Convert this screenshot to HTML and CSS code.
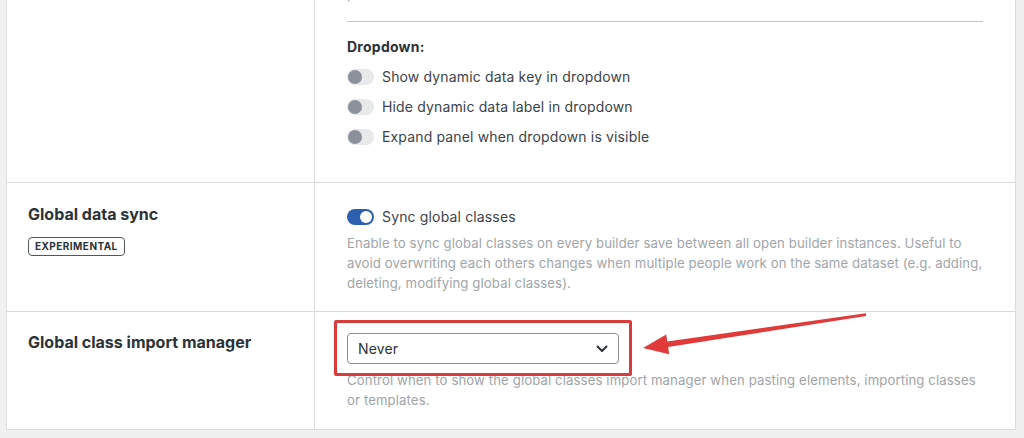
FILE: index.html
```html
<!DOCTYPE html>
<html lang="en">
<head>
<meta charset="utf-8">
<title>Settings</title>
<link rel="stylesheet" href="styles.css">
</head>
<body>
<div class="panel">
  <div class="row row-first">
    <div class="cell-label"></div>
    <div class="cell-field">
      <p class="desc desc-cut">panel.</p>
      <hr class="sep">
      <div class="group-title">Dropdown:</div>
      <div class="toggles">
        <label class="toggle-row"><span class="switch"><span class="knob"></span></span>Show dynamic data key in dropdown</label>
        <label class="toggle-row"><span class="switch"><span class="knob"></span></span>Hide dynamic data label in dropdown</label>
        <label class="toggle-row"><span class="switch"><span class="knob"></span></span>Expand panel when dropdown is visible</label>
      </div>
    </div>
  </div>
  <div class="row row-sync">
    <div class="cell-label">
      <div class="heading">Global data sync</div>
      <span class="badge">EXPERIMENTAL</span>
    </div>
    <div class="cell-field">
      <label class="toggle-row"><span class="switch on"><span class="knob"></span></span>Sync global classes</label>
      <p class="desc">Enable to sync global classes on every builder save between all open builder instances. Useful to avoid overwriting each others changes when multiple people work on the same dataset (e.g. adding, deleting, modifying global classes).</p>
    </div>
  </div>
  <div class="row row-import">
    <div class="cell-label">
      <div class="heading">Global class import manager</div>
    </div>
    <div class="cell-field">
      <div class="select">
        <span>Never</span>
        <svg class="chev" width="12" height="8" viewBox="0 0 12 8"><polyline points="1.5,1.5 6,6 10.5,1.5" fill="none" stroke="#2c3338" stroke-width="2" stroke-linecap="round" stroke-linejoin="round"/></svg>
      </div>
      <p class="desc desc-import">Control when to show the global classes import manager when pasting elements, importing classes or templates.</p>
      <div class="highlight"></div>
    </div>
  </div>
</div>
<svg class="arrow" width="1024" height="438" viewBox="0 0 1024 438">
  <polygon points="643,348 666.2,334.4 667.3,341.6 865.8,313.3 866.2,316 668.1,347 669.2,354.2" fill="#e03a3a"/>
</svg>
</body>
</html>
```

FILE: styles.css
```css
* { box-sizing: border-box; }
html, body { margin: 0; padding: 0; }
body {
  background: #f0f0f1;
  font-family: Inter, "Noto Sans", sans-serif;
  color: #2c3338;
  width: 1024px;
  height: 438px;
  overflow: hidden;
  position: relative;
}
.panel {
  margin: -16px 8px 0 6px;
  background: #fff;
  border: 1px solid #dcdcde;
  border-top: none;
}
.row {
  display: grid;
  grid-template-columns: 308px 1fr;
  border-bottom: 1px solid #dcdcde;
}
.row:last-child { border-bottom: none; }
.cell-label {
  border-right: 1px solid #dcdcde;
  padding: 0 20px 0 21px;
}
.cell-field {
  padding: 0 32px 0 32px;
  position: relative;
}
.desc {
  margin: 0 -4px 0 0;
  font-size: 13.2px;
  letter-spacing: 0.1px;
  line-height: 20px;
  color: #a0a5aa;
}
.sep {
  border: none;
  border-top: 1px solid #c3c4c7;
  margin: 17px 0 0 0;
  height: 0;
}
.group-title {
  margin-top: 15px;
  font-size: 14px;
  font-weight: 700;
  letter-spacing: 0.25px;
  line-height: 20px;
  color: #2c3338;
}
.row-first .cell-field { padding-bottom: 35px; }
.toggles {
  display: flex;
  flex-direction: column;
  gap: 10px;
  margin-top: 10px;
}
.toggle-row {
  display: flex;
  align-items: center;
  gap: 8px;
  font-size: 14px;
  letter-spacing: 0.15px;
  line-height: 20px;
  color: #3c434a;
}
.switch {
  width: 27px;
  height: 16px;
  border-radius: 8px;
  background: #e8e9eb;
  display: flex;
  align-items: center;
  padding: 0 1px;
  flex: none;
}
.switch .knob {
  width: 14px;
  height: 14px;
  border-radius: 50%;
  background: #8b909a;
}
.switch.on {
  background: #2c60ae;
  justify-content: flex-end;
  padding: 0 2px;
}
.switch.on .knob {
  width: 12px;
  height: 12px;
  background: #fff;
}
.heading {
  font-size: 16px;
  font-weight: 700;
  line-height: 20px;
  color: #2c3338;
}
.row-sync .cell-label { padding-top: 21px; }
.row-sync .cell-field { padding-top: 24px; padding-bottom: 18px; }
.row-sync .desc { margin-top: 6px; }
.badge {
  display: inline-block;
  margin-top: 13px;
  border: 1px solid #50575e;
  border-radius: 4px;
  padding: 0 6px;
  height: 19px;
  line-height: 17px;
  font-size: 10px;
  font-weight: 700;
  letter-spacing: 0.45px;
  color: #2c3338;
}
.row-import .cell-label { padding-top: 20px; }
.row-import .cell-field { padding-top: 21px; padding-bottom: 19px; }
.select {
  width: 272px;
  height: 31px;
  border: 1px solid #8c8f94;
  border-radius: 4px;
  display: flex;
  align-items: center;
  justify-content: space-between;
  padding: 0 10px 0 10px;
  font-size: 14px;
  letter-spacing: 0.15px;
  color: #2c3338;
}
.desc-import { margin-top: 6px; }
.highlight {
  position: absolute;
  left: 19px;
  top: 8px;
  width: 298px;
  height: 56px;
  border: 3px solid #da3a3c;
  border-radius: 2px;
}
.arrow {
  position: absolute;
  left: 0;
  top: 0;
  pointer-events: none;
}
```
